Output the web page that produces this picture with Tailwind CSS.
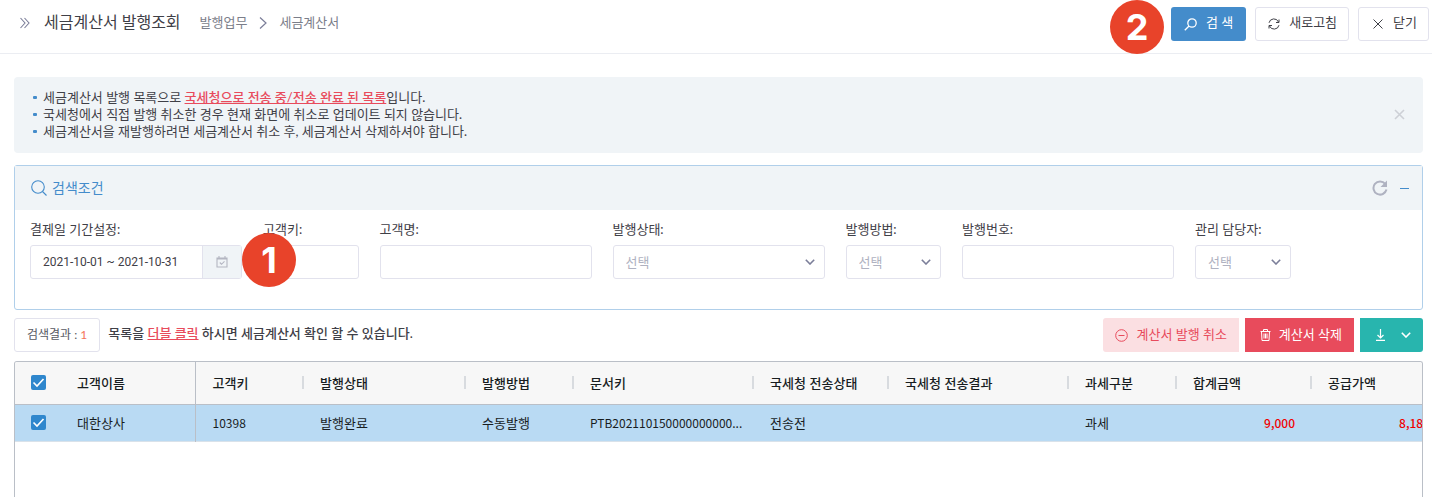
<!DOCTYPE html>
<html lang="ko">

<head>
    <meta charset="UTF-8">
    <meta name="viewport" content="width=device-width, initial-scale=1.0">
    <title>세금계산서 발행조회</title>
    <script src="https://cdn.jsdelivr.net/npm/@tailwindcss/browser@4"></script>
</head>

<body class="flex h-screen flex-col overflow-hidden bg-white font-['Lato','Noto_Sans_CJK_KR',sans-serif] text-[13px] leading-[17px] text-[#3f4047]">

    <!-- Header -->
    <header class="flex h-[54px] shrink-0 items-start border-b border-[#ebedf2] pr-[3px] pl-5">
        <div class="flex h-[45px] items-center">
            <svg class="h-3 w-[10px]" viewBox="0 0 10 12" fill="none" stroke="#7b7e99" stroke-width="1.1"><path d="M.5 1l4.500 5-4.500 5M4.500 1L9 6l-4.500 5" /></svg>
            <h1 class="ml-[14px] pb-[2px] text-base leading-6 text-[#3f4047]">세금계산서 발행조회</h1>
            <nav class="ml-[19px] flex items-center text-[#7b7e8a]">
                <a href="#">발행업무</a>
                <svg class="mx-3 h-3 w-2" viewBox="0 0 8 12" fill="none" stroke="#7b7e99" stroke-width="1.2"><path d="M1 .5L7 6l-6 5.500" /></svg>
                <a href="#">세금계산서</a>
            </nav>
        </div>
        <div class="ml-auto flex items-start">
            <span class="z-10 flex size-[54px] items-center justify-center rounded-full bg-[#e8432a] font-['Inter',sans-serif] text-4xl font-bold text-white">2</span>
            <div class="mt-[7px] ml-[7px] flex gap-[9px]">
                <button class="flex h-[34px] items-center gap-[9px] rounded-[3px] bg-[#448ccb] px-[13px] text-white">
                    <svg class="size-[13px]" viewBox="0 0 13 13" fill="none" stroke="currentColor" stroke-width="1.3"><circle cx="8" cy="5" r="4.200" /><path d="M5 8L.8 12.300" /></svg>
                    <span class="pb-[3px]">검 색</span>
                </button>
                <button class="flex h-[34px] items-center gap-[9px] rounded-[3px] border border-[#e2e2ed] pr-[11px] pl-3">
                    <svg class="size-3" viewBox="0 0 12 12" fill="none" stroke="currentColor" stroke-width="1"><path d="M1 4.800a5 5 0 0 1 9.500-.8M11 1.500V4.500H8M11 7.200a5 5 0 0 1-9.500.8M1 10.500V7.500H4" /></svg>
                    <span class="pb-[3px]">새로고침</span>
                </button>
                <button class="flex h-[34px] items-center gap-[10px] rounded-[3px] border border-[#e2e2ed] pr-[11px] pl-[14px]">
                    <svg class="size-[10px]" viewBox="0 0 10 10" fill="none" stroke="currentColor" stroke-width="1"><path d="M.5.500l9 9M9.500.500l-9 9" /></svg>
                    <span class="pb-[3px]">닫기</span>
                </button>
            </div>
        </div>
    </header>

    <main class="flex min-h-0 flex-1 flex-col pt-[23px] pr-[9px] pl-[14px]">

        <!-- Notice -->
        <section class="flex shrink-0 items-center rounded bg-[#f0f4f7] pt-3 pr-[18px] pb-[13px] pl-[19px]">
            <ul>
                <li class="flex items-center gap-[6px]"><span class="h-[3px] w-1 rounded-[1px] bg-[#448ccb]"></span><p>세금계산서 발행 목록으로 <b class="font-medium text-[#e84b5c] underline">국세청으로 전송 중/전송 완료 된 목록</b>입니다.</p></li>
                <li class="flex items-center gap-[6px]"><span class="h-[3px] w-1 rounded-[1px] bg-[#448ccb]"></span><p>국세청에서 직접 발행 취소한 경우 현재 화면에 취소로 업데이트 되지 않습니다.</p></li>
                <li class="flex items-center gap-[6px]"><span class="h-[3px] w-1 rounded-[1px] bg-[#448ccb]"></span><p>세금계산서을 재발행하려면 세금계산서 취소 후, 세금계산서 삭제하셔야 합니다.</p></li>
            </ul>
            <button class="ml-auto" aria-label="알림 닫기">
                <svg class="size-[11px]" viewBox="0 0 11 11" fill="none" stroke="#cdd0d6" stroke-width="1.6"><path d="M1 1l9 9M10 1l-9 9" /></svg>
            </button>
        </section>

        <!-- Search conditions -->
        <section class="mt-3 shrink-0 rounded-[3px] border border-[#b0cfea]">
            <div class="flex h-11 items-center bg-[#f0f4f7] pr-[13px] pl-4 text-[#448ccb]">
                <svg class="size-4" viewBox="0 0 16 16" fill="none" stroke="currentColor" stroke-width="1.1"><circle cx="7" cy="7" r="6.300" /><path d="M11.500 11.500l4 4" /></svg>
                <h2 class="ml-[5px] text-sm">검색조건</h2>
                <button class="ml-auto" aria-label="초기화">
                    <svg class="size-4" viewBox="0 0 16 16" fill="none"><path d="M13.200 3.800A6.600 6.600 0 1 0 14.500 9.600" stroke="#afb2c1" stroke-width="2" /><path d="M15 .500V7H8.500z" fill="#afb2c1" /></svg>
                </button>
                <button class="ml-3 pt-[9px] pb-2" aria-label="접기"><span class="block h-px w-[9px] bg-[#448ccb]"></span></button>
            </div>
            <form class="grid grid-cols-12 gap-x-[21px] px-[15px] pt-[11px] pb-[30px]">
                <div class="relative col-span-2">
                    <label for="period" class="block">결제일 기간설정:</label>
                    <div class="mt-[7px] flex h-[34px] rounded-[3px] border border-[#e2e2ed]">
                        <input id="period" type="text" value="2021-10-01 ~ 2021-10-31" class="w-full min-w-0 flex-1 px-3 font-['Roboto',sans-serif] text-xs outline-none">
                        <button type="button" aria-label="달력" class="flex w-[39px] items-center justify-center border-l border-[#e2e2ed] bg-[#f0f4f7]">
                            <svg class="size-3" viewBox="0 0 12 12" fill="none" stroke="#b4b6c2" stroke-width="1.1"><path d="M1 2h10v9H1zM1 3h10M3 0v2M9 0v2M3.800 6.500l1.700 1.800 3-3" /></svg>
                        </button>
                    </div>
                    <span class="absolute top-3 left-full flex size-[54px] items-center justify-center rounded-full bg-[#e8432a] font-['Inter',sans-serif] text-4xl font-bold text-white">1</span>
                </div>
                <div>
                    <label for="customerKey" class="block">고객키:</label>
                    <input id="customerKey" type="text" class="mt-[7px] block h-[34px] w-full rounded-[3px] border border-[#e2e2ed] px-3">
                </div>
                <div class="col-span-2">
                    <label for="customerName" class="block">고객명:</label>
                    <input id="customerName" type="text" class="mt-[7px] block h-[34px] w-full rounded-[3px] border border-[#e2e2ed] px-3">
                </div>
                <div class="col-span-2">
                    <label for="issueStatus" class="block">발행상태:</label>
                    <div class="relative mt-[7px]">
                        <select id="issueStatus" class="block h-[34px] w-full appearance-none rounded-[3px] border border-[#e2e2ed] px-3 text-[#afb2c1]"><option>선택</option></select>
                        <svg class="pointer-events-none absolute top-[14px] right-[10px] h-[6px] w-[10px]" viewBox="0 0 10 6" fill="none" stroke="#7b7e99" stroke-width="1.6"><path d="M.800.800L5 5l4.200-4.200" /></svg>
                    </div>
                </div>
                <div>
                    <label for="issueMethod" class="block">발행방법:</label>
                    <div class="relative mt-[7px]">
                        <select id="issueMethod" class="block h-[34px] w-full appearance-none rounded-[3px] border border-[#e2e2ed] px-3 text-[#afb2c1]"><option>선택</option></select>
                        <svg class="pointer-events-none absolute top-[14px] right-[10px] h-[6px] w-[10px]" viewBox="0 0 10 6" fill="none" stroke="#7b7e99" stroke-width="1.6"><path d="M.800.800L5 5l4.200-4.200" /></svg>
                    </div>
                </div>
                <div class="col-span-2">
                    <label for="issueNo" class="block">발행번호:</label>
                    <input id="issueNo" type="text" class="mt-[7px] block h-[34px] w-full rounded-[3px] border border-[#e2e2ed] px-3">
                </div>
                <div>
                    <label for="manager" class="block">관리 담당자:</label>
                    <div class="relative mt-[7px]">
                        <select id="manager" class="block h-[34px] w-full appearance-none rounded-[3px] border border-[#e2e2ed] px-3 text-[#afb2c1]"><option>선택</option></select>
                        <svg class="pointer-events-none absolute top-[14px] right-[10px] h-[6px] w-[10px]" viewBox="0 0 10 6" fill="none" stroke="#7b7e99" stroke-width="1.6"><path d="M.800.800L5 5l4.200-4.200" /></svg>
                    </div>
                </div>
            </form>
        </section>

        <!-- Result toolbar -->
        <div class="mt-2 flex h-[34px] shrink-0">
            <div class="flex items-center rounded-[3px] border border-[#e2e2ed] px-3 text-xs text-[#575962]">검색결과 :&nbsp;<span class="text-[#f4745a]">1</span></div>
            <p class="ml-2 pt-[7px] font-medium">목록을 <span class="text-[#e84b5c] underline">더블 클릭</span> 하시면 세금계산서 확인 할 수 있습니다.</p>
            <div class="ml-auto flex gap-[6px]">
                <button class="flex items-center gap-2 rounded-l-[3px] bg-[#fbdfe2] px-3 text-[#e84b5c]">
                    <svg class="size-[13px]" viewBox="0 0 13 13" fill="none" stroke="currentColor" stroke-width="1"><circle cx="6.500" cy="6.500" r="5.800" /><path d="M3.500 6.500h6" /></svg>
                    <span class="pb-[2px]">계산서 발행 취소</span>
                </button>
                <button class="flex items-center gap-2 bg-[#e84b5c] pr-3 pl-[15px] text-white">
                    <svg class="h-3 w-[11px]" viewBox="0 0 11 12" fill="none" stroke="currentColor" stroke-width="1"><path d="M.5 2.500h10M3.500 2.500v-2h4v2M1.500 2.500l.5 9h7l.5-9M4 4.500v5M5.500 4.500v5M7 4.500v5" /></svg>
                    <span class="pb-[2px]">계산서 삭제</span>
                </button>
                <button class="flex items-center gap-4 rounded-r-[3px] bg-[#28b5ae] pr-3 pl-4 text-white" aria-label="다운로드">
                    <svg class="h-3 w-[9px]" viewBox="0 0 9 12" fill="none" stroke="currentColor" stroke-width="1.2"><path d="M4.500 0v9M1.500 6l3 3 3-3M0 11.400h9" /></svg>
                    <svg class="h-[6px] w-[10px]" viewBox="0 0 10 6" fill="none" stroke="currentColor" stroke-width="1.6"><path d="M.800.800L5 5l4.200-4.200" /></svg>
                </button>
            </div>
        </div>

        <!-- Result grid -->
        <div class="mt-[9px] min-h-0 flex-1 overflow-hidden rounded-t-[3px] border border-b-0 border-[#babfc7]">
            <table class="w-[1431px] table-fixed text-left font-['Noto_Sans_CJK_KR',sans-serif] text-[#181d1f]">
                <colgroup>
                    <col class="w-[45px]">
                    <col class="w-[135px]">
                    <col class="w-[108px]">
                    <col class="w-[162px]">
                    <col class="w-[108px]">
                    <col class="w-[180px]">
                    <col class="w-[135px]">
                    <col class="w-[180px]">
                    <col class="w-[108px]">
                    <col class="w-[135px]">
                    <col class="w-[135px]">
                </colgroup>
                <thead class="bg-[#f7f7f7]">
                    <tr class="h-[42px] border-b border-[#babfc7]">
                        <th class="pl-4">
                            <span class="relative block size-[15px]">
                                <input type="checkbox" checked aria-label="전체 선택" class="block size-[15px] appearance-none rounded-[2px] bg-[#2f87cd]">
                                <svg class="pointer-events-none absolute inset-0" viewBox="0 0 15 15" fill="none" stroke="#fff" stroke-width="1.6"><path d="M2.500 7.500l3.500 3.500 6.500-7" /></svg>
                            </span>
                        </th>
                        <th class="border-r border-[#babfc7] pl-[17px] font-medium">고객이름</th>
                        <th class="pl-[17px] font-medium"><div class="-mr-px flex items-center justify-between">고객키<i class="h-[13px] w-[2px] bg-[#d8dbdf]"></i></div></th>
                        <th class="pl-[17px] font-medium"><div class="-mr-px flex items-center justify-between">발행상태<i class="h-[13px] w-[2px] bg-[#d8dbdf]"></i></div></th>
                        <th class="pl-[17px] font-medium"><div class="-mr-px flex items-center justify-between">발행방법<i class="h-[13px] w-[2px] bg-[#d8dbdf]"></i></div></th>
                        <th class="pl-[17px] font-medium"><div class="-mr-px flex items-center justify-between">문서키<i class="h-[13px] w-[2px] bg-[#d8dbdf]"></i></div></th>
                        <th class="pl-[17px] font-medium"><div class="-mr-px flex items-center justify-between">국세청 전송상태<i class="h-[13px] w-[2px] bg-[#d8dbdf]"></i></div></th>
                        <th class="pl-[17px] font-medium"><div class="-mr-px flex items-center justify-between">국세청 전송결과<i class="h-[13px] w-[2px] bg-[#d8dbdf]"></i></div></th>
                        <th class="pl-[17px] font-medium"><div class="-mr-px flex items-center justify-between">과세구분<i class="h-[13px] w-[2px] bg-[#d8dbdf]"></i></div></th>
                        <th class="pl-[17px] font-medium"><div class="-mr-px flex items-center justify-between">합계금액<i class="h-[13px] w-[2px] bg-[#d8dbdf]"></i></div></th>
                        <th class="pl-[17px] font-medium">공급가액</th>
                    </tr>
                </thead>
                <tbody>
                    <tr class="h-[37px] border-b border-[#d9e2ea] bg-[#b9daf3]">
                        <td class="pl-4">
                            <span class="relative block size-[15px]">
                                <input type="checkbox" checked aria-label="대한상사 선택" class="block size-[15px] appearance-none rounded-[2px] bg-[#2f87cd]">
                                <svg class="pointer-events-none absolute inset-0" viewBox="0 0 15 15" fill="none" stroke="#fff" stroke-width="1.6"><path d="M2.500 7.500l3.500 3.500 6.500-7" /></svg>
                            </span>
                        </td>
                        <td class="border-r border-[#babfc7] pl-[17px]">대한상사</td>
                        <td class="pl-[17px] text-xs">10398</td>
                        <td class="pl-[17px]">발행완료</td>
                        <td class="pl-[17px]">수동발행</td>
                        <td class="pl-[17px] text-xs">PTB202110150000000000...</td>
                        <td class="pl-[17px]">전송전</td>
                        <td class="pl-[17px]"></td>
                        <td class="pl-[17px]">과세</td>
                        <td class="pr-4 text-right text-xs font-medium text-[#f00000]">9,000</td>
                        <td class="pr-4 text-right text-xs font-medium text-[#f00000]">8,182</td>
                    </tr>
                </tbody>
            </table>
        </div>
    </main>

</body>

</html>
